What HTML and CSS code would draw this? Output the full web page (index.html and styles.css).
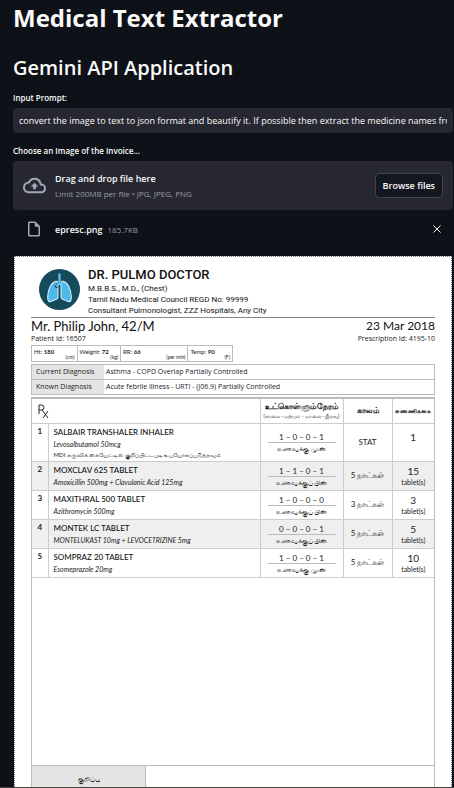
FILE: index.html
```
<!DOCTYPE html>
<html lang="en">
<head>
<meta charset="utf-8">
<meta name="viewport" content="width=device-width, initial-scale=1">
<title>Medical Text Extractor</title>
<link rel="stylesheet" href="styles.css">
</head>
<body>
<main class="app">
  <h1>Medical Text Extractor</h1>
  <h2>Gemini API Application</h2>

  <label class="label" for="prompt">Input Prompt:</label>
  <input class="prompt" id="prompt" type="text" value="convert the image to text to json format and beautify it. If possible then extract the medicine names from it">

  <p class="label label-upload" id="upload-label">Choose an Image of the Invoice...</p>
  <section class="dropzone" aria-labelledby="upload-label">
    <svg class="cloud" viewBox="0 0 24 24" aria-hidden="true"><path d="M19.35 10.04A7.49 7.49 0 0 0 12 4C9.11 4 6.6 5.64 5.35 8.04A5.994 5.994 0 0 0 0 14c0 3.31 2.69 6 6 6h13c2.76 0 5-2.24 5-5 0-2.64-2.05-4.78-4.65-4.96zM19 18H6c-2.21 0-4-1.79-4-4 0-2.05 1.53-3.76 3.56-3.97l1.07-.11.5-.95A5.469 5.469 0 0 1 12 6c2.62 0 4.88 1.86 5.39 4.43l.3 1.5 1.53.11A2.98 2.98 0 0 1 22 15c0 1.65-1.35 3-3 3zM8 13h2.55v3h2.9v-3H16l-4-4-4 4z"/></svg>
    <div class="drop-text">
      <span class="drop-title">Drag and drop file here</span>
      <small>Limit 200MB per file • JPG, JPEG, PNG</small>
    </div>
    <button class="browse" type="button">Browse files</button>
  </section>
  <div class="file">
    <svg class="file-icon" viewBox="0 0 24 24" aria-hidden="true"><path d="M14 2H6c-1.100 0-1.990.9-1.990 2L4 20c0 1.100.89 2 1.990 2H18c1.100 0 2-.9 2-2V8l-6-6zM6 20V4h7v5h5v11H6z"/></svg>
    <span class="file-name">epresc.png</span>
    <small>185.7KB</small>
    <button class="remove" type="button" aria-label="Remove file"><svg viewBox="0 0 8 8" aria-hidden="true"><path d="M.5.5l7 7M7.500.5l-7 7"/></svg></button>
  </div>

  <article class="sheet">
    <header class="doctor">
      <svg class="lungs" viewBox="0 0 40 40" aria-hidden="true">
        <circle cx="20" cy="20" r="20" fill="#164b5c"/>
        <path d="M16.500 12c-4.500 1-8 8-8 15 0 4 .5 5 2 5 3-.5 4-2 6.500-2.500 1-.3 1.500-1 1.500-2V14c0-1.500-.5-2.300-2-2zM23.500 12c4.500 1 8 8 8 15 0 4-.5 5-2 5-3-.5-4-2-6.500-2.500-1-.3-1.500-1-1.500-2V14c0-1.500.5-2.300 2-2z" fill="#4db9ed" stroke="#e4f4fb"/>
        <path d="M20 4.500V15M20 14l-4 4" fill="none" stroke="#164b5c" stroke-width="3"/>
        <path d="M20 4.500V14l-3 3M20 14l3 3" fill="none" stroke="#6cccf5" stroke-width="2"/>
      </svg>
      <div>
        <h3>DR. PULMO DOCTOR</h3>
        <p>M.B.B.S., M.D., (Chest)</p>
        <p>Tamil Nadu Medical Council REGD No: 99999</p>
        <p>Consultant Pulmonologist, ZZZ Hospitals, Any City</p>
      </div>
    </header>
    <div class="patient">
      <div><strong>Mr. Philip John, 42/M</strong><span>Patient Id: 16507</span></div>
      <div class="right"><strong>23 Mar 2018</strong><span>Prescription Id: 4195-10</span></div>
    </div>
    <div class="vitals">
      <div>Ht: <b>180</b><i>(cm)</i></div>
      <div>Weight: <b>72</b><i>(kg)</i></div>
      <div>RR: <b>66</b><i>(per min)</i></div>
      <div>Temp: <b>90</b><i>(F)</i></div>
    </div>
    <table class="diagnosis">
      <tr><th scope="row">Current Diagnosis</th><td>Asthma - COPD Overlap Partially Controlled</td></tr>
      <tr><th scope="row">Known Diagnosis</th><td>Acute febrile illness - URTI - (J06.9) Partially Controlled</td></tr>
    </table>
    <div class="rx">
      <table class="meds">
        <colgroup><col class="c-no"><col><col class="c-time"><col class="c-days"><col class="c-qty"></colgroup>
        <thead>
          <tr>
            <th colspan="2" class="rx-mark"><svg viewBox="0 0 11 14" role="img" aria-label="Rx"><path d="M1 10V1h2.500a2.300 2.300 0 0 1 0 5H1M4 6l6 8M10 7l-5 7"/></svg></th>
            <th lang="ta">உட்கொள்ளும் நேரம்<small>(காலை - மதியம் - மாலை - இரவு)</small></th>
            <th lang="ta">காலம்</th>
            <th lang="ta" class="qty-head">எண்ணிக்கை</th>
          </tr>
        </thead>
        <tbody>
          <tr class="tall"><td class="no">1</td><td class="drug"><b>SALBAIR TRANSHALER INHALER</b><em>Levosalbutamol 50mcg</em><span lang="ta">MDI கருவிக் கையேட்டில் குறிப்பிட்டபடி உபயோகப்படுத்தவும்</span></td><td class="time"><span>1 – 0 – 0 – 1</span><span lang="ta">உணவுக்கு முன்</span></td><td class="days stat">STAT</td><td class="qty"><b>1</b></td></tr>
          <tr><td class="no">2</td><td class="drug"><b>MOXCLAV 625 TABLET</b><em>Amoxicillin 500mg + Clavulanic Acid 125mg</em></td><td class="time"><span>1 – 1 – 0 – 1</span><span lang="ta">உணவுக்குப் பின்</span></td><td class="days" lang="ta">5 நாட்கள்</td><td class="qty"><b>15</b>tablet(s)</td></tr>
          <tr><td class="no">3</td><td class="drug"><b>MAXITHRAL 500 TABLET</b><em>Azithromycin 500mg</em></td><td class="time"><span>1 – 0 – 0 – 0</span><span lang="ta">உணவுக்குப் பின்</span></td><td class="days" lang="ta">3 நாட்கள்</td><td class="qty"><b>3</b>tablet(s)</td></tr>
          <tr><td class="no">4</td><td class="drug"><b>MONTEK LC TABLET</b><em>MONTELUKAST 10mg + LEVOCETRIZINE 5mg</em></td><td class="time"><span>0 – 0 – 0 – 1</span><span lang="ta">உணவுக்குப் பின்</span></td><td class="days" lang="ta">5 நாட்கள்</td><td class="qty"><b>5</b>tablet(s)</td></tr>
          <tr><td class="no">5</td><td class="drug"><b>SOMPRAZ 20 TABLET</b><em>Esomeprazole 20mg</em></td><td class="time"><span>1 – 0 – 0 – 1</span><span lang="ta">உணவுக்கு முன்</span></td><td class="days" lang="ta">5 நாட்கள்</td><td class="qty"><b>10</b>tablet(s)</td></tr>
        </tbody>
      </table>
      <div class="notes"><div lang="ta">குறிப்பு</div></div>
    </div>
  </article>
</main>
</body>
</html>
```
FILE: styles.css
```
* { box-sizing: border-box; }
body {
  margin: 0;
  background: #0e1117;
  color: #fafafa;
  font-family: "Open Sans", "Noto Sans", sans-serif;
  font-size: 9px;
}
h1, h2, h3, p { margin: 0; }
.app {
  display: flex;
  flex-direction: column;
  min-height: 100vh;
  padding: 0 1px 0 13px;
  border-bottom: 1px solid #45433f;
}
h1 { font-size: 24px; line-height: 36px; font-weight: 700; }
h2 { font-size: 20px; line-height: 28px; font-weight: 600; margin-top: 18px; }
.label { font-size: 8px; line-height: 12px; font-weight: 600; margin-top: 10px; }
.label-upload { margin-top: 12px; }
.prompt {
  width: 100%;
  height: 25px;
  margin-top: 4px;
  padding: 0 6px;
  border: 0;
  border-radius: 4px;
  background: #262730;
  color: #fafafa;
  font: 9px "Open Sans", sans-serif;
}
.dropzone {
  display: flex;
  align-items: center;
  height: 49px;
  margin-top: 4px;
  padding: 0 10px;
  border-radius: 4px;
  background: #262730;
}
.cloud { width: 23px; height: 23px; fill: #a3a8b8; }
.drop-text { flex: 1; margin-left: 9px; }
.drop-title { display: block; line-height: 15px; font-weight: 600; }
small { font-size: 8px; color: #9a9ca5; }
.drop-text small { display: block; line-height: 15px; }
.browse {
  height: 25px;
  padding: 0 7px;
  border: 1px solid #41444c;
  border-radius: 4px;
  background: #131720;
  color: #fafafa;
  font: 600 9px "Open Sans", sans-serif;
}
.file { display: flex; align-items: center; height: 38px; margin-bottom: 8px; padding: 0 12px; }
.file-icon { width: 18px; height: 18px; fill: #a3a8b8; margin-right: 12px; }
.file-name { margin-right: 5px; font-weight: 600; }
.remove { margin-left: auto; padding: 0; border: 0; background: none; line-height: 0; }
.remove svg { width: 8px; height: 8px; stroke: #fafafa; fill: none; }

.sheet {
  flex: 1;
  display: flex;
  flex-direction: column;
  margin-left: 1px;
  margin-right: 1px;
  padding: 10px 16px 0;
  background: #fff;
  color: #222;
  border: 1px dotted #777;
  border-bottom: 0;
  font-family: Lato, sans-serif;
  font-size: 7px;
}
.doctor { display: flex; align-items: flex-start; height: 51px; padding-left: 8px; border-bottom: 1px solid #888; font-family: Roboto, sans-serif; color: #111; }
.lungs { width: 41px; height: 41px; margin: 2px 8px 0 0; }
h3 { font-size: 13px; line-height: 16px; font-weight: 500; }
.doctor p { font-size: 8px; line-height: 11px; }
.patient { display: flex; justify-content: space-between; font-family: "Open Sans", sans-serif; }
.patient strong { display: block; font-family: Lato, sans-serif; font-size: 13px; line-height: 16px; font-weight: 400; color: #111; }
.patient .right strong { font-size: 12px; }
.patient span { display: block; font-size: 7px; line-height: 10px; }
.right { text-align: right; }
.vitals { display: grid; grid-template-columns: 45fr 44fr 68fr 45fr; width: 50%; height: 17px; margin-top: 1px; border: 1px solid #bbb; font-size: 6px; }
.vitals div { padding: 2px 2px 0; line-height: 7px; white-space: nowrap; }
.vitals div + div { border-left: 1px solid #bbb; }
.vitals i { display: block; font-style: normal; font-size: 5px; line-height: 5px; text-align: right; }
table { border-collapse: collapse; width: 100%; }
.diagnosis { margin-top: 2px; font-family: "Open Sans", sans-serif; }
.diagnosis th, .diagnosis td { height: 15px; padding: 0 4px; border: 1px solid #bbb; font-weight: 400; text-align: left; line-height: 12px; }
.diagnosis th { width: 18%; background: #e4e4e4; border-right: 0; white-space: nowrap; }
.diagnosis td { padding-left: 2px; border-left: 0; }
.rx { flex: 1; display: flex; flex-direction: column; margin-top: 2px; border: 1px solid #bbb; border-top-width: 2px; border-bottom: 0; }
.meds { table-layout: fixed; }
.c-no { width: 16px; }
.c-time { width: 83px; }
.c-days { width: 49px; }
.c-qty { width: 42px; }
.meds th { height: 24px; padding: 0; font-size: 8px; line-height: 11px; color: #111; }
.meds th small { display: block; font-size: 5px; line-height: 8px; font-weight: 400; color: #222; white-space: nowrap; }
.meds .qty-head { font-size: 6px; }
.meds .rx-mark { text-align: left; padding-left: 6px; }
.rx-mark svg { display: block; width: 11px; height: 14px; fill: none; stroke: #222; }
.meds td { height: 29px; padding: 0; border-top: 1px solid #ccc; vertical-align: top; }
.meds .tall td { height: 38px; }
.meds tr > * + * { border-left: 1px solid #ccc; }
.meds tbody tr:nth-child(even) { background: #efefef; }
.meds tbody tr:last-child td { border-bottom: 1px solid #ccc; }
.meds .no { text-align: center; padding-top: 3px; font-size: 8px; line-height: 9px; font-weight: 700; }
.meds .drug { padding: 2px 5px 0; white-space: nowrap; }
.drug b { display: block; font-size: 8px; line-height: 12px; font-weight: 500; color: #111; }
.drug em { display: block; font-size: 7px; line-height: 12px; }
.drug span { display: block; line-height: 10px; font-size: 6px; }
.meds .time { padding: 4px 7px 0; text-align: center; }
.meds .tall .time { padding-top: 8px; }
.time span { display: block; line-height: 10px; font-size: 8px; }
.time span + span { border-top: 1px solid #bbb; font-size: 7px; line-height: 11px; white-space: nowrap; }
.meds .days { vertical-align: middle; text-align: center; font-size: 8px; white-space: nowrap; }
.meds .qty { text-align: center; padding-top: 3px; line-height: 10px; }
.meds .tall .qty { padding-top: 7px; }
.qty b { display: block; font-size: 10px; line-height: 12px; font-weight: 400; }
.notes { height: 22px; margin-top: auto; border-top: 1px solid #bbb; display: flex; }
.notes div { width: 114px; background: #e4e4e4; border-right: 1px solid #bbb; text-align: center; line-height: 24px; font-size: 7px; }
```
